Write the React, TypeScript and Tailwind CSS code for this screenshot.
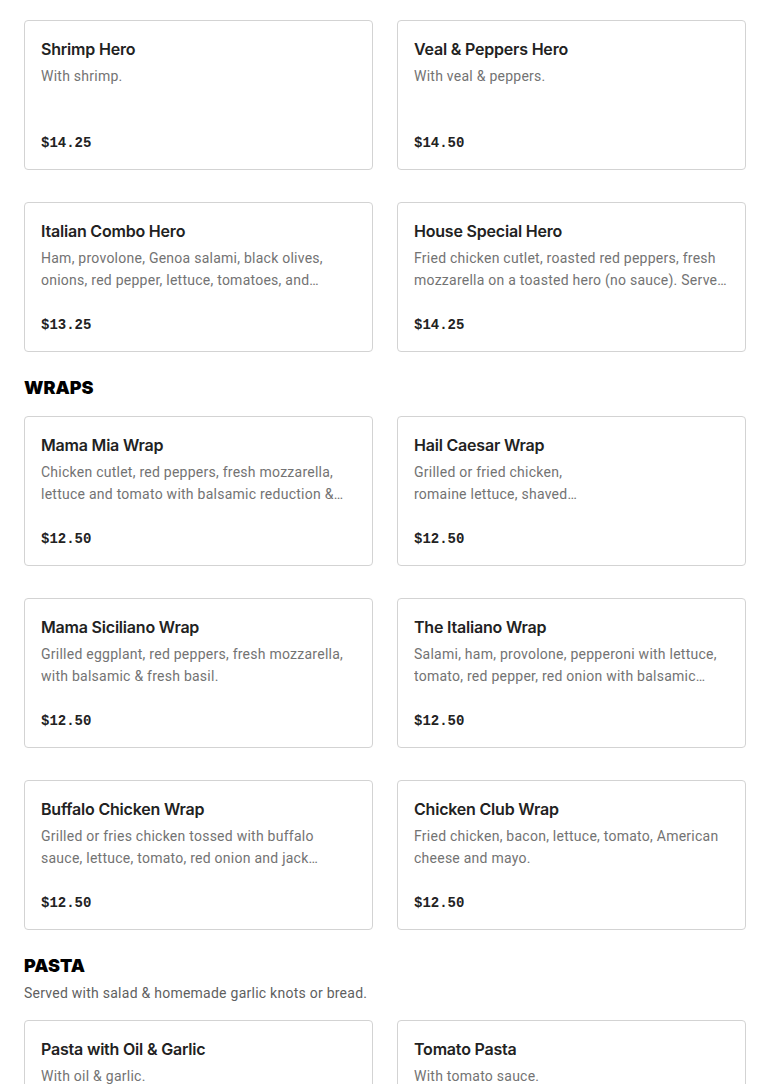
import React from 'react';

type Item = { name: string; desc: string; price: string };

const heroes: Item[] = [
  { name: 'Shrimp Hero', desc: 'With shrimp.', price: '$14.25' },
  { name: 'Veal & Peppers Hero', desc: 'With veal & peppers.', price: '$14.50' },
  {
    name: 'Italian Combo Hero',
    desc: 'Ham, provolone, Genoa salami, black olives, onions, red pepper, lettuce, tomatoes, and vinaigrette.',
    price: '$13.25',
  },
  {
    name: 'House Special Hero',
    desc: 'Fried chicken cutlet, roasted red peppers, fresh mozzarella on a toasted hero (no sauce). Served with balsamic.',
    price: '$14.25',
  },
];

const wraps: Item[] = [
  {
    name: 'Mama Mia Wrap',
    desc: 'Chicken cutlet, red peppers, fresh mozzarella, lettuce and tomato with balsamic reduction & fresh basil.',
    price: '$12.50',
  },
  {
    name: 'Hail Caesar Wrap',
    desc: 'Grilled or fried chicken,\nromaine lettuce, shaved\nparmesan and caesar dressing.',
    price: '$12.50',
  },
  {
    name: 'Mama Siciliano Wrap',
    desc: 'Grilled eggplant, red peppers, fresh mozzarella, with balsamic & fresh basil.',
    price: '$12.50',
  },
  {
    name: 'The Italiano Wrap',
    desc: 'Salami, ham, provolone, pepperoni with lettuce, tomato, red pepper, red onion with balsamic vinaigrette.',
    price: '$12.50',
  },
  {
    name: 'Buffalo Chicken Wrap',
    desc: 'Grilled or fries chicken tossed with buffalo sauce, lettuce, tomato, red onion and jack cheese.',
    price: '$12.50',
  },
  {
    name: 'Chicken Club Wrap',
    desc: 'Fried chicken, bacon, lettuce, tomato, American cheese and mayo.',
    price: '$12.50',
  },
];

const pasta: Item[] = [
  { name: 'Pasta with Oil & Garlic', desc: 'With oil & garlic.', price: '$12.00' },
  { name: 'Tomato Pasta', desc: 'With tomato sauce.', price: '$12.00' },
];

function Card({ item }: { item: Item }) {
  return (
    <div className="h-[150px] border border-[#d3d3d3] rounded-[4px] bg-white px-4 pt-4 pb-[15px] flex flex-col">
      <div className="text-[16px] leading-6 font-semibold text-[#222] tracking-[-0.2px]">{item.name}</div>
      <p className="mt-1 text-[14px] leading-[22px] text-[#737373] line-clamp-2 whitespace-pre-line font-['Roboto',sans-serif] tracking-[0.25px]">
        {item.desc}
      </p>
      <div className="mt-auto text-[14px] leading-[22px] font-bold text-[#222] font-['Liberation_Mono',monospace]">
        {item.price}
      </div>
    </div>
  );
}

function Grid({ items }: { items: Item[] }) {
  return (
    <div className="grid grid-cols-2 gap-x-6 gap-y-8">
      {items.map((it) => (
        <Card key={it.name} item={it} />
      ))}
    </div>
  );
}

export default function App() {
  return (
    <div className="min-h-screen bg-white px-6 pt-5 pb-10 font-['Inter',sans-serif]">
      <Grid items={heroes} />

      <h2 className="mt-[22px] mb-[14px] text-[18px] leading-7 font-black text-black">WRAPS</h2>
      <Grid items={wraps} />

      <h2 className="mt-[22px] text-[18px] leading-7 font-black text-black">PASTA</h2>
      <p className="mt-[2px] mb-4 text-[14px] leading-[22px] text-[#5f5f5f] font-['Roboto',sans-serif] tracking-[0.25px]">
        Served with salad & homemade garlic knots or bread.
      </p>
      <Grid items={pasta} />
    </div>
  );
}
